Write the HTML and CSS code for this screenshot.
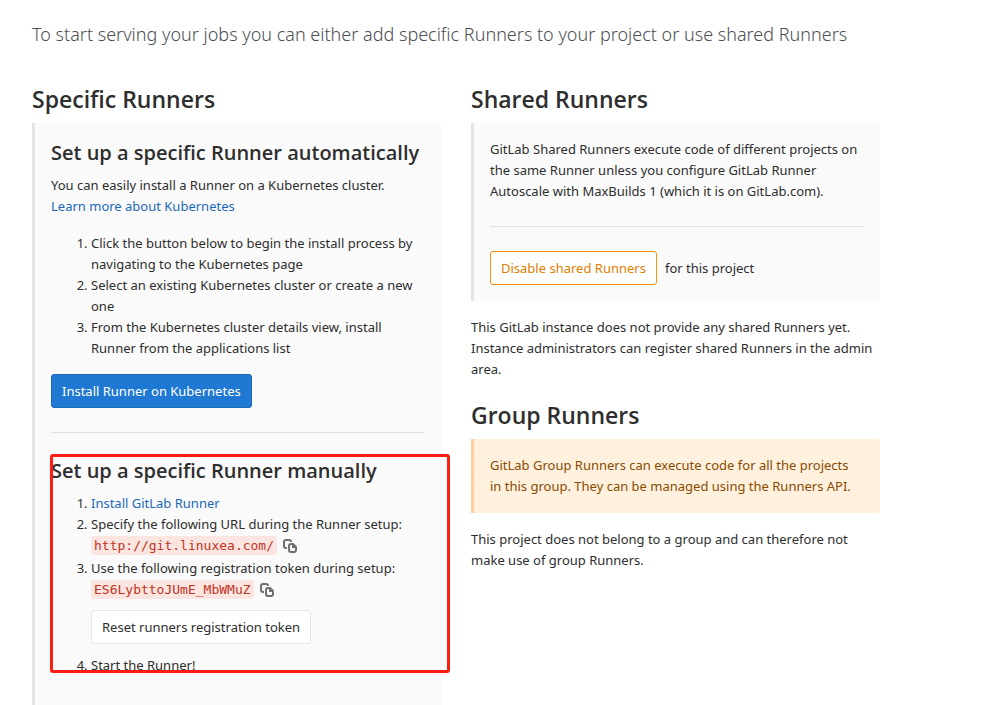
FILE: index.html
```html
<!DOCTYPE html>
<html lang="en">
<head>
<meta charset="utf-8">
<title>Runners</title>
<link rel="stylesheet" href="styles.css">
</head>
<body>
<main class="page">
  <p class="intro">To start serving your jobs you can either add specific Runners to your project or use shared Runners</p>
  <div class="columns">
    <section class="column">
      <h3 class="title">Specific Runners</h3>
      <div class="callout callout-tall">
        <h4 class="subtitle">Set up a specific Runner automatically</h4>
        <p class="text">You can easily install a Runner on a Kubernetes cluster.<br><a class="link" href="#kubernetes">Learn more about Kubernetes</a></p>
        <ol class="steps">
          <li>Click the button below to begin the install process by navigating to the Kubernetes page</li>
          <li>Select an existing Kubernetes cluster or create a new one</li>
          <li>From the Kubernetes cluster details view, install Runner from the applications list</li>
        </ol>
        <button class="btn btn-primary" type="button">Install Runner on Kubernetes</button>
        <hr class="rule">
        <div class="manual">
          <h4 class="subtitle">Set up a specific Runner manually</h4>
          <ol class="steps">
            <li><a class="link" href="#install">Install GitLab Runner</a></li>
            <li>Specify the following URL during the Runner setup:
              <div class="copy-row"><code class="code">http://git.linuxea.com/</code><button class="copy" type="button" aria-label="Copy URL"><svg class="icon" viewBox="0 0 14 14"><path d="M4 9H3Q1 9 1 7V3Q1 1 3 1H6Q8 1 8 3M8 5H10L13 8V11Q13 13 11 13H8Q6 13 6 11V7Q6 5 8 5Z"/><path class="fold" d="M9 5v4h4V7.500L10.500 5z"/></svg></button></div>
            </li>
            <li>Use the following registration token during setup:
              <div class="copy-row"><code class="code">ES6LybttoJUmE_MbWMuZ</code><button class="copy" type="button" aria-label="Copy token"><svg class="icon" viewBox="0 0 14 14"><path d="M4 9H3Q1 9 1 7V3Q1 1 3 1H6Q8 1 8 3M8 5H10L13 8V11Q13 13 11 13H8Q6 13 6 11V7Q6 5 8 5Z"/><path class="fold" d="M9 5v4h4V7.500L10.500 5z"/></svg></button></div>
              <button class="btn btn-plain" type="button">Reset runners registration token</button>
            </li>
            <li>Start the Runner!</li>
          </ol>
        </div>
      </div>
    </section>
    <section class="column">
      <h3 class="title">Shared Runners</h3>
      <div class="callout">
        <p class="text">GitLab Shared Runners execute code of different projects on the same Runner unless you configure GitLab Runner Autoscale with MaxBuilds 1 (which it is on GitLab.com).</p>
        <hr class="rule">
        <div class="toggle"><button class="btn btn-warning" type="button">Disable shared Runners</button><span>for this project</span></div>
      </div>
      <p class="note">This GitLab instance does not provide any shared Runners yet. Instance administrators can register shared Runners in the admin area.</p>
      <h3 class="title">Group Runners</h3>
      <div class="callout callout-warning">
        <p class="text">GitLab Group Runners can execute code for all the projects<br>in this group. They can be managed using the Runners API.</p>
      </div>
      <p class="note">This project does not belong to a group and can therefore not make use of group Runners.</p>
    </section>
  </div>
</main>
</body>
</html>
```
FILE: styles.css
```css
*, *::after { box-sizing: border-box; }
body {
  margin: 0;
  background: #fff;
  color: #2e2e2e;
  font: 13px/21px "Noto Sans", "Open Sans", sans-serif;
}
.page { height: 100vh; overflow: hidden; padding: 20px 123px 0 32px; }
.intro { margin: 0 0 36px; font: 300 18px/28px "Noto Sans", sans-serif; white-space: nowrap; color: #4c4e54; }
.columns { display: grid; grid-template-columns: 1fr 1fr; gap: 30px; }
.title { margin: 0 0 8px; font: 600 23px/31px "Open Sans", sans-serif; }
.subtitle { margin: 0 0 8px; font: 600 20px/28px "Open Sans", sans-serif; }
.callout { padding: 16px; border-left: 3px solid #e5e5e5; background: #fafafa; }
.callout-tall { min-height: 640px; }
.callout-warning { border-color: #ffd097; background: #fff1de; color: #8a4b00; }
.text { margin: 0; }
.link { color: #1b69b6; text-decoration: none; }
.steps { margin: 16px 0 15px; padding-left: 40px; }
.btn { display: block; height: 34px; padding: 0 10px; border: 1px solid; border-radius: 3px; font: inherit; }
.btn-primary { border-color: #1b69b6; background: #1f78d1; color: #fff; }
.btn-plain { margin: 10px 0 11px; border-color: #e5e5e5; background: #fff; color: #2e2e2e; }
.btn-warning { border-color: #fc9403; background: #fff; color: #de7e00; }
.rule { height: 1px; margin: 24px 0; border: 0; background: #e1e1e1; }
.toggle { display: flex; align-items: center; gap: 8px; }
.note { margin: 16px 0 20px; }
.manual { position: relative; }
.manual::after {
  content: "";
  position: absolute;
  inset: -3px -25px 0 -1px;
  height: 219px;
  border: 3px solid #ff1d13;
  border-radius: 3px;
  pointer-events: none;
}
.manual .steps { margin: 8px 0; }
.copy-row { display: flex; align-items: center; height: 21px; margin-bottom: 2px; }
.code { padding: 2px 3px; border-radius: 3px; background: #fbe5e1; color: #c0341d; font: 13px/15px "DejaVu Sans Mono", monospace; }
.copy { margin-left: 6px; padding: 0; border: 0; background: none; }
.icon { display: block; width: 14px; height: 14px; fill: none; stroke: #707070; stroke-width: 2; }
.fold { fill: #707070; stroke: none; }
```
